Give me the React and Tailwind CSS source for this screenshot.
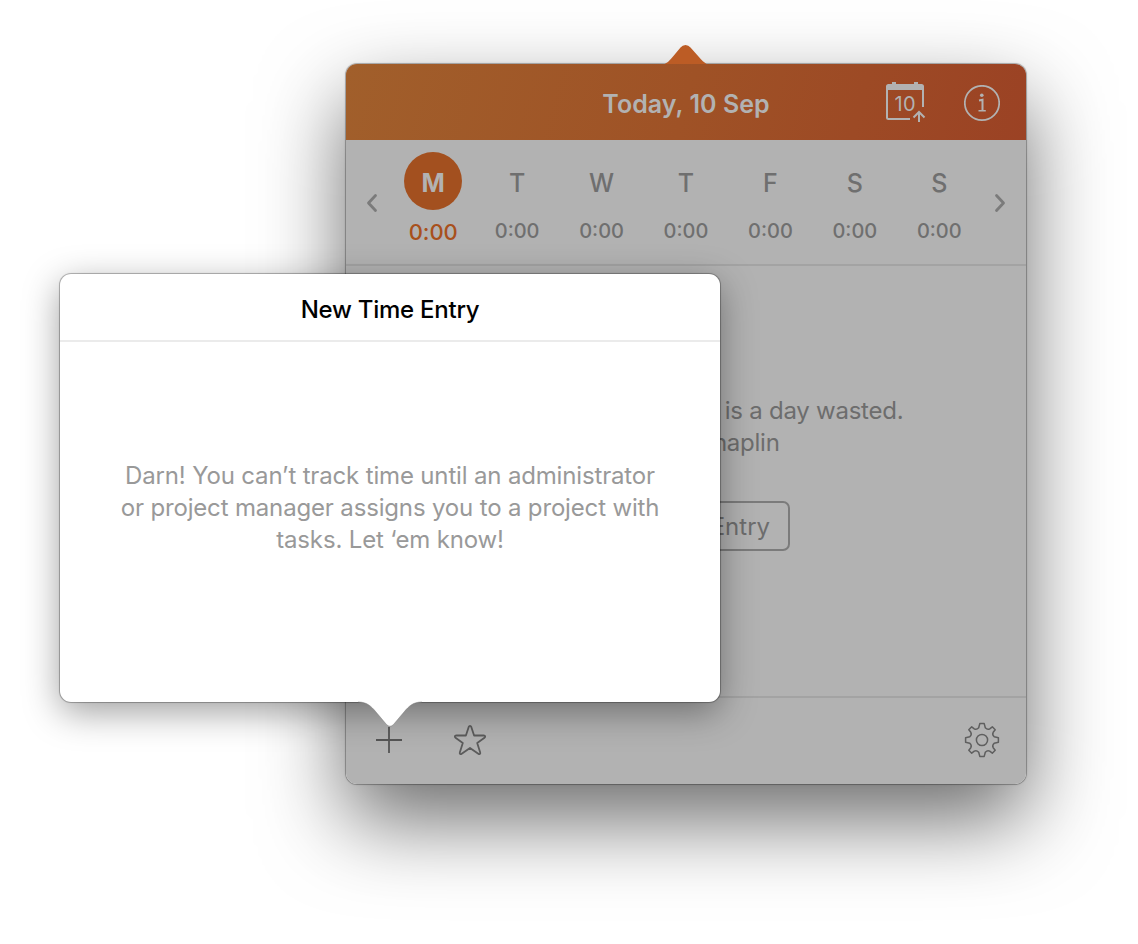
const DAYS = ["M", "T", "W", "T", "F", "S", "S"];

function CalendarIcon() {
  return (
    <svg width="40" height="42" viewBox="0 0 40 42" fill="none" className="block">
      <path d="M0 8V4.500Q0 2 2.500 2H6V0H10V2H28V0H32V2H35.500Q38 2 38 4.500V8Z" fill="#b2b2b2" />
      <path d="M1 7V35.500Q1 37 2.500 37H24M37 7V25" stroke="#b2b2b2" strokeWidth="2" />
      <path d="M33 40V30M27.500 35.500L33 30L38.500 35.500" stroke="#b2b2b2" strokeWidth="2" />
      <text x="19" y="29" textAnchor="middle" fill="#b2b2b2" fontSize="20" fontFamily="Inter, sans-serif" textLength="21">10</text>
    </svg>
  );
}

function InfoIcon() {
  return (
    <svg width="36" height="37" viewBox="0 0 36 37" fill="none" className="block">
      <circle cx="18" cy="18" r="17.200" stroke="#b2b2b2" strokeWidth="1.700" />
      <circle cx="17.800" cy="10.200" r="1.800" fill="#b2b2b2" />
      <path d="M15 15.500L18.500 14.800V25.500" stroke="#b2b2b2" strokeWidth="2" />
      <path d="M14.500 25.800H21.800" stroke="#b2b2b2" strokeWidth="1.400" />
    </svg>
  );
}

function Chevron({ flip }) {
  return (
    <svg width="12" height="20" viewBox="0 0 12 20" fill="none" className={flip ? "block rotate-180" : "block"}>
      <path d="M9.500 2.500L2.500 10L9.500 17.500" stroke="#7b7b7b" strokeWidth="2.800" strokeLinecap="round" strokeLinejoin="round" />
    </svg>
  );
}

function StarIcon() {
  return (
    <svg width="34" height="32" viewBox="0 0 34 32" fill="none" className="block">
      <path
        d="M17 1.800C17.600 1.800 18 2.200 18.200 2.800L21.100 11.500H30.700C32.400 11.500 32.600 13 31.500 13.800L24.200 18.900L27.200 28.400C27.600 30 26.400 30.600 25.300 29.800L17 23.900L8.700 29.800C7.600 30.600 6.400 30 6.800 28.400L9.800 18.900L2.500 13.800C1.400 13 1.600 11.500 3.300 11.500H12.900L15.800 2.800C16 2.200 16.400 1.800 17 1.800Z"
        stroke="#5c5c5c"
        strokeWidth="1.800"
        strokeLinejoin="round"
      />
    </svg>
  );
}

function GearIcon() {
  return (
    <svg width="36" height="36" viewBox="-18 -18 36 36" fill="none" stroke="#5f5f5f" strokeWidth="1.500" strokeLinejoin="round" className="block">
      <circle r="5.600" />
      <path d="M-2.200 -16.400H2.200L3.300 -12.200Q5.500 -9.900 7.700 -11.200L10.300 -13.200L13.200 -10.300L11.200 -7.700Q9.900 -5.500 12.200 -3.300L16.400 -2.200V2.200L12.200 3.300Q9.900 5.500 11.200 7.700L13.200 10.300L10.300 13.200L7.700 11.200Q5.500 9.900 3.300 12.200L2.200 16.400H-2.200L-3.300 12.200Q-5.500 9.900 -7.700 11.200L-10.300 13.200L-13.200 10.300L-11.200 7.700Q-9.900 5.500 -12.200 3.300L-16.400 2.200V-2.200L-12.200 -3.300Q-9.900 -5.500 -11.200 -7.700L-13.200 -10.300L-10.300 -13.200L-7.700 -11.200Q-5.500 -9.900 -3.300 -12.200Z" />
    </svg>
  );
}

function Week() {
  return (
    <div className="flex h-[126px] shrink-0 border-b-2 border-[#a3a3a3]">
      <div className="flex w-[45px] items-center justify-center pt-[2px] pl-[7px]"><Chevron /></div>
      <div className="grid w-[591px] grid-cols-7 pt-3">
        {DAYS.map((day, i) => (
          <div key={i} className="flex flex-col items-center">
            <div
              className={
                i === 0
                  ? "flex size-[58px] items-center justify-center rounded-full bg-[#a3501f] pt-[5px] text-[25px] font-bold text-[#b2b2b2]"
                  : "flex size-[58px] items-center justify-center pt-[5px] pr-px text-[25px] font-medium text-[#6f6f6f]"
              }
            >
              {day}
            </div>
            <div
              className={
                i === 0
                  ? "mt-[10px] text-[22px] leading-6 font-medium tracking-[-0.1px] text-[#a8501c]"
                  : "mt-[9px] pr-px text-[20px] leading-6 font-medium text-[#6f6f6f]"
              }
            >
              0:00
            </div>
          </div>
        ))}
      </div>
      <div className="flex w-11 items-center justify-center pt-[2px] pr-[8px]"><Chevron flip /></div>
    </div>
  );
}

function TimerWindow() {
  return (
    <div className="relative h-[720px] w-[680px] rounded-[11px] shadow-[0_0_0_1px_rgba(0,0,0,0.22),0_0_3px_rgba(0,0,0,0.2),0_36px_84px_rgba(0,0,0,0.58)]">
      <svg width="48" height="21" viewBox="0 0 48 21" className="absolute -top-5 left-[316px]">
        <path d="M1 21C6 18.500 8 16 11 12.500L18.500 3.500Q20.500 1 23.500 1Q26.500 1 28.500 3.500L36.500 12.500C39.500 16 42 18.500 46 21Z" fill="#bc5c25" />
      </svg>
      <div className="relative flex h-full flex-col overflow-hidden rounded-[11px] bg-[#b2b2b2]">
        <header className="grid h-[76px] shrink-0 grid-cols-[1fr_auto_1fr] items-center bg-[linear-gradient(105deg,#a15f2b_0%,#9f5226_50%,#9b4224_100%)]">
          <span />
          <h1 className="pt-[3px] text-[25px] leading-8 font-semibold tracking-[0.05px] text-[#b2b2b2]">Today, 10 Sep</h1>
          <div className="flex items-center justify-end gap-[38px] pt-[2px] pr-[26px]">
            <CalendarIcon />
            <InfoIcon />
          </div>
        </header>
        <Week />
        <main className="flex h-[430px] shrink-0 flex-col items-center pt-[129px] text-[#6d6d6d]">
          <p className="text-center text-[24px] leading-8 tracking-[-0.25px]">
            A day without laughter is a day wasted.
            <br />– Charlie Chaplin
          </p>
          <div className="mt-[42px] flex h-[50px] w-[208px] items-center justify-center rounded-[7px] border-2 border-[#7b7b7b] pt-[2px] pr-[2px] text-[24px] whitespace-nowrap">
            Add New Entry
          </div>
        </main>
        <footer className="flex grow items-center border-t-2 border-[#a3a3a3] pr-[26px] pb-[2px] pl-[30px]">
          <svg width="26" height="26" viewBox="0 0 26 26" className="block">
            <path d="M13 0V26M0 13H26" stroke="#555" strokeWidth="1.800" />
          </svg>
          <div className="ml-[51px]"><StarIcon /></div>
          <div className="ml-auto"><GearIcon /></div>
        </footer>
      </div>
    </div>
  );
}

function EntryPopover() {
  return (
    <section className="absolute top-[274px] left-[60px] flex h-[428px] w-[660px] flex-col rounded-[11px] bg-white shadow-[0_0_0_1px_rgba(0,0,0,0.2),0_0_2px_rgba(0,0,0,0.3),0_10px_36px_rgba(0,0,0,0.38)]">
      <h2 className="flex h-[68px] shrink-0 items-center justify-center border-b-2 border-[#ebebeb] pt-[6px] text-[24px] font-medium tracking-[-0.25px] text-black">
        New Time Entry
      </h2>
      <p className="pt-[118px] text-center text-[24px] leading-8 tracking-[-0.16px] text-[#999]">
        Darn! You can’t track time until an administrator
        <br />
        or project manager assigns you to a project with
        <br />
        tasks. Let ‘em know!
      </p>
      <svg width="64" height="27" viewBox="0 0 64 27" className="absolute top-[427px] left-[298px]">
        <path d="M0 0V1C9 1 13 5 18 11L28.500 23.500Q32 27 35.500 23.500L46 11C51 5 55 1 64 1V0Z" fill="white" />
        <path d="M0 1C9 1 13 5 18 11L28.500 23.500Q32 27 35.500 23.500L46 11C51 5 55 1 64 1" stroke="#777" strokeOpacity="0.600" strokeWidth="0.800" fill="none" />
      </svg>
    </section>
  );
}

export default function App() {
  return (
    <div className="relative h-[944px] w-[1138px] overflow-hidden bg-white pt-16 pl-[346px] font-['Inter',sans-serif]">
      <TimerWindow />
      <EntryPopover />
    </div>
  );
}
